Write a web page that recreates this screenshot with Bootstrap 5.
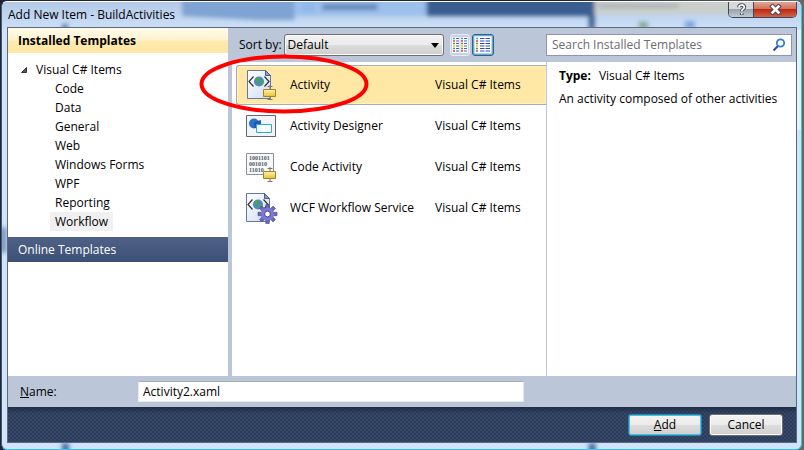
<!DOCTYPE html>
<html lang="en">
<head>
<meta charset="utf-8">
<meta name="viewport" content="width=device-width, initial-scale=1">
<title>Add New Item - BuildActivities</title>
<link href="https://cdn.jsdelivr.net/npm/bootstrap@5.3.0/dist/css/bootstrap.min.css" rel="stylesheet">
<style>
body{font:12px/16px "Open Sans","Noto Sans",sans-serif;color:#000;background:linear-gradient(90deg,#1e2438,#1e2438 70%,#6b675e)}
button,input,select{font:inherit;color:inherit}
.win{height:100vh;padding:1px 2px 0 1px}
.frame{position:relative;background:#cfe3fa;border:1px solid #36c4e8;border-top-color:#fff;border-left-color:#4a5a70;border-radius:6px;padding:0 4px 6px 5px;overflow:hidden}
.glass{position:absolute;left:0;top:0;width:100%;height:100%}
.titlebar{position:relative;height:25px;padding-left:1px}
.titlebar h1{font-size:12px}
.caption-btns{position:absolute;right:0;top:0;height:16px;border:1px solid #3e4658;border-top:0;border-radius:0 0 5px 5px;overflow:hidden}
.caption-btns button{border:0;padding:0;display:flex;align-items:center;justify-content:center}
.help{width:25px;background:linear-gradient(#d6d8dc 45%,#9da3ac 50%,#c3c9d0)}
.close-x{width:42px;background:linear-gradient(#e3a696,#d2705a 45%,#b92c10 50%,#d3624a);box-shadow:-1px 0 #3e4658}
.client{position:relative;border:1px solid #5d6878;background:#bbc7d8;min-height:0}
.side{width:220px;background:#fff}
.side-head{height:25px;padding:0 10px;background:linear-gradient(#fffaec,#fff3cf 45%,#ffe9ac 55%,#ffe8a6)}
.side-head2{height:25px;padding:0 10px;color:#fff;background:linear-gradient(#4f6186,#3d5076)}
.tree{padding:7px 0 6px}
.tree ul{padding-left:42px}
.tree button{border:0;background:none;height:19px;padding:0 5px}
.tree .root{padding:0 6px}
.tree .twist{margin-left:12px}
.tree button.on{background:#f0f0f0}
.main{margin-left:4px;min-width:0}
.tools{height:34px}
.tools .sorting{gap:2px;padding-left:7px}
.pick{width:160px;height:22px;border:1px solid #707070;border-radius:3px;padding:0 3px;appearance:none;background:linear-gradient(#f2f2f2,#ebebeb 48%,#dddddd 50%,#cfcfcf);box-shadow:inset 0 0 0 1px #fafafa}
.pick-wrap{position:relative}
.pick-wrap svg{position:absolute;right:5px;top:9px;pointer-events:none}
.view{width:20px;height:22px;border:1px solid #e6ecf4;border-radius:3px;background:#c9d3e0;padding:0}
.view.on{width:22px;border:1px solid #2c628b;background:linear-gradient(#d6edf9,#a4d6f0);box-shadow:inset 0 0 0 1px #6aa9cc}
.finder{width:246px;height:22px;border:1px solid #8a97ac;background:#fff;margin-right:4px;padding:0 5px}
.finder input{border:0;outline:0;padding:0;min-width:0;background:none}
.finder input::placeholder{color:#6d6d6d;opacity:1}
.list{background:#fff;padding:3px 0 0 4px;gap:1px;min-width:0}
.tpl{height:40px;border:1px solid transparent;background:none;padding:0 0 0 9px;text-align:left;border-right:0}
.tpl.on{background:#ffe8a6;border-color:#a5adb0;border-radius:3px 0 0 3px;box-shadow:inset 0 0 0 1px #fff0c4}
.tpl svg{width:32px;height:32px;flex:none}
.tpl .tname{width:145px;margin-left:12px}
.info{width:250px;background:#fff;border-left:1px solid #bbc7d8;padding:6px 12px}
.info p{margin:0 0 7px}
.namebar{height:31px;padding-left:12px}
.namebar label{width:118px}
.namebar input{width:386px;height:21px;border:1px solid #e3e9ef;border-top-color:#abadb3;padding:0 4px;background:#fff}
.foot{height:35px;gap:7px;padding-right:13px;background:linear-gradient(#1f2c44,transparent 6px),conic-gradient(#36486a 25%,transparent 0 50%,#36486a 0 75%,transparent 0) 0 0/4px 4px,#2b3b58}
.cmd{width:74px;height:22px;border:1px solid #707070;border-radius:3px;padding:0;background:linear-gradient(#f3f3f3,#ebebeb 48%,#dddddd 50%,#cfcfcf);box-shadow:inset 0 0 0 1px #fbfbfb}
.cmd.main-cmd{border-color:#3a7f9c;box-shadow:inset 0 0 0 1px #35c5f0}
.ring{position:absolute;left:192px;top:27px;width:178px;height:60px;pointer-events:none;overflow:visible}
</style>
<script src="https://cdn.jsdelivr.net/npm/bootstrap@5.3.0/dist/js/bootstrap.bundle.min.js"></script>
</head>
<body>
<div class="win d-flex flex-column">
<div class="frame d-flex flex-column flex-grow-1">
<svg class="glass" viewBox="0 0 798 446" preserveAspectRatio="none" aria-hidden="true">
<defs><filter id="soft" x="-20%" y="-50%" width="140%" height="200%"><feGaussianBlur stdDeviation="2"/></filter>
<linearGradient id="sheen" x2="0" y2="1"><stop stop-color="#b4c9e6"/><stop offset="1" stop-color="#cde1f9"/></linearGradient></defs>
<rect width="798" height="28" fill="url(#sheen)"/>
<g filter="url(#soft)">
<path d="M240-6h185v20H255z" fill="#9dbfec"/>
<path d="M180-6h112v24h-35l-77-4z" fill="#7fa3d2"/>
<rect x="300" y="0" width="12" height="10" fill="#8fb8ea"/>
<rect x="320" y="2" width="55" height="6" fill="#6485ba"/>
<rect x="424" y="-6" width="164" height="20" fill="#3b5d90"/>
<rect x="586" y="-5" width="6" height="32" fill="#3f6090"/>
<rect x="592" y="-5" width="138" height="17" fill="#c9d0cb"/>
<rect x="596" y="2" width="80" height="4" fill="#a9b0b4"/>
<rect x="636" y="20" width="9" height="6" fill="#7fa58e"/>
<rect x="682" y="19" width="10" height="7" fill="#7ba6e6"/>
<rect x="60" y="22" width="6" height="6" fill="#5f7fae"/>
<rect x="60" y="440" width="7" height="10" fill="#4c6fa3"/>
<rect x="586" y="440" width="7" height="10" fill="#4c6fa3"/>
<rect x="-3" y="225" width="8" height="25" fill="#7f9cc6"/>
</g>
<path d="M793 28h7v100h-7z" fill="#e6f0fb"/>
</svg>
<header class="titlebar d-flex align-items-center">
<h1 class="m-0 fw-normal lh-base">Add New Item - BuildActivities</h1>
<div class="caption-btns d-flex">
<button class="help" type="button" aria-label="Help"><svg width="11" height="13" viewBox="0 0 11 13"><path d="M3 4.2C3 1.2 8.3 1.2 8.3 4.2C8.3 6.2 5.7 6 5.7 8.2M5.7 10v2" fill="none" stroke="#444b58" stroke-width="3.6"/><path d="M3 4.4C3 1.2 8.3 1.2 8.3 4.2C8.3 6.2 5.7 6 5.700 8.2M5.700 10v1.6" fill="none" stroke="#fff" stroke-width="1.7"/></svg></button>
<button class="close-x" type="button" aria-label="Close"><svg width="13" height="11" viewBox="0 0 13 11"><path d="M3.500 2.500l6 6M9.500 2.500l-6 6" stroke="#5a4350" stroke-width="4.600" stroke-linecap="square"/><path d="M3.500 2.500l6 6M9.500 2.500l-6 6" stroke="#fff" stroke-width="2.600" stroke-linecap="square"/></svg></button>
</div>
</header>
<main class="client d-flex flex-column flex-grow-1">
<div class="d-flex flex-grow-1">
<nav class="side flex-shrink-0" aria-label="Templates">
<div class="side-head d-flex align-items-center fw-bold">Installed Templates</div>
<div class="tree">
<div class="d-flex align-items-center"><svg class="twist" width="10" height="8" viewBox="0 0 10 8"><path d="M6.500 1.500v5h-5z" fill="#595959" stroke="#333"/></svg><button class="root" type="button">Visual C# Items</button></div>
<ul class="list-unstyled m-0">
<li class="d-flex"><button type="button">Code</button></li>
<li class="d-flex"><button type="button">Data</button></li>
<li class="d-flex"><button type="button">General</button></li>
<li class="d-flex"><button type="button">Web</button></li>
<li class="d-flex"><button type="button">Windows Forms</button></li>
<li class="d-flex"><button type="button">WPF</button></li>
<li class="d-flex"><button type="button">Reporting</button></li>
<li class="d-flex"><button class="on" type="button">Workflow</button></li>
</ul>
</div>
<div class="side-head2 d-flex align-items-center">Online Templates</div>
</nav>
<section class="main d-flex flex-column flex-grow-1">
<div class="tools d-flex align-items-center justify-content-between">
<div class="sorting d-flex align-items-center">
<label for="sort">Sort by:</label>
<div class="pick-wrap d-flex"><select id="sort" class="pick"><option>Default</option></select><svg width="8" height="5"><path d="M0 0h8L4 5z"/></svg></div>
<button class="view d-flex align-items-center justify-content-center ms-1" type="button" aria-label="Small icons"><svg width="16" height="16" viewBox="0 0 16 16"><path fill="#fff" d="M0 0h7.500v16H0zM8.500 0H16v16H8.500z"/><g id="dots" stroke-width="1.500"><path d="M1 1.500h2" stroke="#3a9fd0"/><path d="M1 4h2" stroke="#e33"/><path d="M1 6.500h2" stroke="#4a9e4a"/><path d="M1 9h2" stroke="#e0c020"/><path d="M1 11.500h2" stroke="#4a9e4a"/><path d="M1 14h2" stroke="#e33"/></g><use href="#dots" x="8"/><path d="M4 1.500h3M4 4h3M4 6.500h3M4 9h3M4 11.500h3M4 14h3M12 1.500h3M12 4h3M12 6.500h3M12 9h3M12 11.500h3M12 14h3" stroke="#4858c8"/></svg></button>
<button class="view on d-flex align-items-center justify-content-center" type="button" aria-label="Medium icons"><svg width="16" height="16" viewBox="0 0 16 16"><path fill="#fff" d="M0 0h16v16H0z"/><use href="#dots"/><path d="M5 1.500h10M5 4h10M5 6.500h10M5 9h10M5 11.500h10M5 14h10" stroke="#3448b8" stroke-width="1.200" stroke-dasharray="4.500 1"/></svg></button>
</div>
<div class="finder d-flex align-items-center"><input class="flex-grow-1" type="search" aria-label="Search Installed Templates" placeholder="Search Installed Templates"><svg width="14" height="14" viewBox="0 0 14 14" fill="none"><path d="M1.500 12.500L6 8" stroke="#3347a0" stroke-width="2.200"/><circle cx="8.500" cy="5" r="3.700" stroke="#2f7fcb" stroke-width="1.800"/></svg></div>
</div>
<div class="d-flex flex-grow-1">
<div class="list d-flex flex-column flex-grow-1">
<button class="tpl on d-flex align-items-center" type="button"><svg viewBox="0 0 32 32"><defs><linearGradient id="pg" x2="1" y2="1"><stop stop-color="#fff"/><stop offset="1" stop-color="#cfdcf4"/></linearGradient><linearGradient id="yl" x2="0" y2="1"><stop stop-color="#fff3a8"/><stop offset="1" stop-color="#e9bf3c"/></linearGradient></defs>
<g id="page"><path d="M1.500 1.500h18l5 5v23h-23z" fill="url(#pg)" stroke="#65779c"/><path d="M19.500 1.500v5h5z" fill="#8ea2c6" stroke="#4a5c80"/><circle cx="13" cy="12.500" r="5" fill="#4f86d0"/><path d="M9 9.500l3-1.500 2.500 2-1.500 2.500-2.500 1zM14 12.500l3.500-1-.5 3.500-2.500 2zM10 14.500l2.500.5-.5 2z" fill="#4aa552"/><path d="M7.500 7.500L3 12.500l4.500 5M18.500 7.500l4.500 5-4.500 5" fill="none" stroke="#333" stroke-width="1.200"/></g>
<g id="act"><path d="M24 16v15M21.500 17.500h5M21.500 30.500h5" stroke="#777"/><path d="M17.500 20.500h12v7h-12z" fill="url(#yl)" stroke="#a8831c"/></g></svg><span class="tname">Activity</span><span>Visual C# Items</span></button>
<button class="tpl d-flex align-items-center" type="button"><svg viewBox="0 0 32 32"><path d="M.5 5.500h29v21H.5z" fill="#f1f4f9" stroke="#666"/><circle cx="8" cy="13.500" r="5" fill="#2f70c8"/><path d="M8 12l7-2v8H8z" fill="#1e5cb4"/><path d="M10.500 14.500h15v8h-15z" fill="#f4fcff" stroke="#35a9d2"/></svg><span class="tname">Activity Designer</span><span>Visual C# Items</span></button>
<button class="tpl d-flex align-items-center" type="button"><svg viewBox="0 0 32 32"><path d="M.5 2.500h27v21H.5z" fill="#f8f9fb" stroke="#8791a0"/><g font-family="Liberation Serif" font-size="6" font-weight="bold" fill="#505866"><text x="3" y="9">1001101</text><text x="3" y="15">001010</text><text x="3" y="21">11010</text></g><use href="#act"/></svg><span class="tname">Code Activity</span><span>Visual C# Items</span></button>
<button class="tpl d-flex align-items-center" type="button"><svg viewBox="0 0 32 32"><use href="#page" x="-1"/><g transform="translate(21.500 22)"><g fill="#6a68c4" stroke="#43418f" stroke-width=".6"><path id="teeth" d="M-1.700-9.500h3.400v4h-3.400zM-1.700 5.500h3.400v4h-3.400zM-9.500-1.700h4v3.400h-4zM5.500-1.700h4v3.400h-4z"/><use href="#teeth" transform="rotate(45)"/></g><circle r="6.600" fill="#7c7ad0"/><circle r="2.900" fill="#fff" stroke="#43418f"/></g></svg><span class="tname">WCF Workflow Service</span><span>Visual C# Items</span></button>
</div>
<aside class="info flex-shrink-0"><p><b class="me-2">Type:</b>Visual C# Items</p><p>An activity composed of other activities</p></aside>
</div>
</section>
</div>
<div class="namebar d-flex align-items-center"><label for="nm"><u>N</u>ame:</label><input id="nm" type="text" value="Activity2.xaml"></div>
<footer class="foot d-flex align-items-center justify-content-end"><button class="cmd main-cmd" type="button"><u>A</u>dd</button><button class="cmd" type="button">Cancel</button></footer>
<svg class="ring" viewBox="0 0 178 60" aria-hidden="true"><ellipse cx="84" cy="29" rx="82.500" ry="27.500" fill="none" stroke="#f00" stroke-width="4"/></svg>
</main>
</div>
</div>
</body>
</html>
